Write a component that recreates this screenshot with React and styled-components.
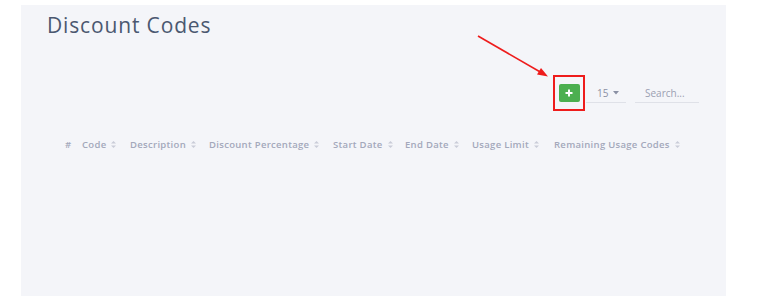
import React from "react";
import styled, { createGlobalStyle } from "styled-components";

const GlobalStyle = createGlobalStyle`
  html, body {
    margin: 0;
    padding: 0;
    background: #ffffff;
    font-family: "Open Sans", "Noto Sans", Arial, sans-serif;
  }
`;

const columns = [
  { label: "#", width: 17, sort: false },
  { label: "Code", width: 48, sort: true },
  { label: "Description", width: 79, sort: true },
  { label: "Discount Percentage", width: 124, sort: true },
  { label: "Start Date", width: 72, sort: true },
  { label: "End Date", width: 67, sort: true },
  { label: "Usage Limit", width: 82, sort: true },
  { label: "Remaining Usage Codes", width: 140, sort: true },
];

const SortIcon = () => (
  <svg width="5" height="7" viewBox="0 0 5 7">
    <path d="M2.5 0 L5 2.6 H0 Z" fill="#c9ccd8" />
    <path d="M2.5 7 L5 4.4 H0 Z" fill="#c9ccd8" />
  </svg>
);

const PlusIcon = () => (
  <svg width="8" height="8" viewBox="0 0 8 8">
    <path d="M4 0.5 V7.5 M0.5 4 H7.5" stroke="#ffffff" strokeWidth="2" />
  </svg>
);

const Caret = () => (
  <svg width="6" height="4" viewBox="0 0 6 4">
    <path d="M0 0 H6 L3 3.5 Z" fill="#8a90a4" />
  </svg>
);

const Arrow = () => (
  <svg width="80" height="50" viewBox="0 0 80 50">
    <line x1="2" y1="2" x2="66" y2="39" stroke="#ee1c1c" strokeWidth="1.6" />
    <path d="M72 42.5 L61 40.5 L65 34 Z" fill="#ee1c1c" />
  </svg>
);

export default function App() {
  return (
    <>
      <GlobalStyle />
      <Page>
        <Panel>
          <Title>Discount Codes</Title>
          <Toolbar>
            <ArrowWrap>
              <Arrow />
            </ArrowWrap>
            <Highlight>
              <AddButton aria-label="Add">
                <PlusIcon />
              </AddButton>
            </Highlight>
            <PageSize>
              15 <Caret />
            </PageSize>
            <SearchInput placeholder="Search..." />
          </Toolbar>
          <HeaderRow>
            {columns.map((c) => (
              <HeaderCell key={c.label} $width={c.width}>
                {c.label}
                {c.sort && <SortIcon />}
              </HeaderCell>
            ))}
          </HeaderRow>
        </Panel>
      </Page>
    </>
  );
}

const Page = styled.div`
  padding: 5px 34px 3px 21px;
  height: 299px;
  box-sizing: border-box;
`;

const Panel = styled.div`
  background: #f4f5f9;
  height: 291px;
  padding: 9px 0 0 26px;
  box-sizing: border-box;
`;

const Title = styled.h1`
  margin: 0;
  font-size: 21px;
  font-weight: 500;
  color: #4b5870;
  letter-spacing: 0.85px;
  line-height: 22px;
`;

const Toolbar = styled.div`
  display: flex;
  align-items: center;
  justify-content: flex-end;
  padding-right: 27px;
  margin-top: 39px;
  position: relative;
`;

const ArrowWrap = styled.div`
  position: absolute;
  left: 429px;
  top: -41px;
  pointer-events: none;
`;

const Highlight = styled.div`
  border: 2px solid #ee1c1c;
  width: 32px;
  height: 36px;
  box-sizing: border-box;
  display: flex;
  align-items: center;
  justify-content: center;
  margin-right: 1px;
`;

const AddButton = styled.button`
  width: 21px;
  height: 18px;
  border: 0;
  border-radius: 2px;
  background: #4caf50;
  display: flex;
  align-items: center;
  justify-content: center;
  padding: 0;
`;

const PageSize = styled.div`
  width: 40px;
  height: 20px;
  box-sizing: border-box;
  border-bottom: 1px solid #dfe1e8;
  display: flex;
  align-items: center;
  gap: 5px;
  padding-left: 11px;
  font-size: 10px;
  color: #8a90a4;
  margin-right: 9px;
`;

const SearchInput = styled.input`
  width: 64px;
  height: 20px;
  box-sizing: border-box;
  border: 0;
  border-bottom: 1px solid #dfe1e8;
  background: transparent;
  padding: 0 0 0 10px;
  font-family: inherit;
  font-size: 10px;
  outline: none;

  &::placeholder {
    color: #9ba0b2;
  }
`;

const HeaderRow = styled.div`
  display: flex;
  align-items: center;
  margin-top: 27px;
  padding-left: 18px;
`;

const HeaderCell = styled.div`
  width: ${(p) => p.$width}px;
  flex-shrink: 0;
  display: flex;
  align-items: center;
  gap: 5px;
  font-size: 9.5px;
  font-weight: 600;
  letter-spacing: 0.3px;
  color: #a3a8bb;
  white-space: nowrap;
`;
